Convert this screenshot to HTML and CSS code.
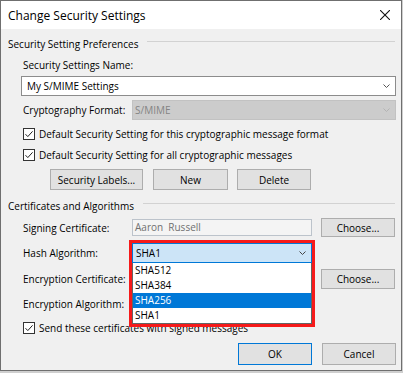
FILE: index.html
```html
<!DOCTYPE html>
<html lang="en">
<head>
  <meta charset="UTF-8" />
  <title>Change Security Settings</title>
  <link rel="stylesheet" href="styles.css">
</head>
<body>
  <div class="dialog">
    <div class="titlebar">
      <span class="title">Change Security Settings</span>
      <svg class="close" width="10" height="10" viewBox="0 0 10 10"><path d="M0 0L10 10M10 0L0 10" stroke="#111" stroke-width="1.1" fill="none"/></svg>
    </div>

    <div class="content">
      <div class="section">Security Setting Preferences</div>

      <div class="label-row">Security Settings Name:</div>
      <div class="combo name-combo">
        <span>My S/MIME Settings</span>
        <svg class="chev" width="7" height="4" viewBox="0 0 7 4"><path d="M0.5 0.5L3.5 3.5L6.5 0.5" stroke="#555" fill="none"/></svg>
      </div>

      <div class="field-row crypto-row">
        <span class="label">Cryptography Format:</span>
        <div class="combo disabled wide">
          <span>S/MIME</span>
          <svg class="chev" width="7" height="4" viewBox="0 0 7 4"><path d="M0.5 0.5L3.5 3.5L6.5 0.5" stroke="#b3b3b3" fill="none"/></svg>
        </div>
      </div>

      <div class="check-row check-first">
        <svg class="check" width="12" height="12" viewBox="0 0 12 12"><rect x="0.5" y="0.5" width="11" height="11" fill="#fff" stroke="#333"/><path d="M2.5 6.2L4.8 8.6L9.6 3.3" stroke="#222" fill="none"/></svg>
        <span>Default Security Setting for this cryptographic message format</span>
      </div>
      <div class="check-row check-second">
        <svg class="check" width="12" height="12" viewBox="0 0 12 12"><rect x="0.5" y="0.5" width="11" height="11" fill="#fff" stroke="#333"/><path d="M2.5 6.2L4.8 8.6L9.6 3.3" stroke="#222" fill="none"/></svg>
        <span>Default Security Setting for all cryptographic messages</span>
      </div>

      <div class="button-row">
        <button class="btn labels-btn">Security Labels...</button>
        <button class="btn new-btn">New</button>
        <button class="btn delete-btn">Delete</button>
      </div>

      <div class="section section-certs">Certificates and Algorithms</div>

      <div class="field-row signing-row">
        <span class="label">Signing Certificate:</span>
        <div class="textbox">Aaron&nbsp; Russell</div>
        <button class="btn choose-btn">Choose...</button>
      </div>

      <div class="field-row hash-row">
        <span class="label">Hash Algorithm:</span>
        <div class="hash-wrap">
          <div class="combo focused">
            <span>SHA1</span>
            <svg class="chev" width="7" height="4" viewBox="0 0 7 4"><path d="M0.5 0.5L3.5 3.5L6.5 0.5" stroke="#444" fill="none"/></svg>
          </div>
          <ul class="droplist">
            <li>SHA512</li>
            <li>SHA384</li>
            <li class="selected">SHA256</li>
            <li>SHA1</li>
          </ul>
          <div class="callout"></div>
        </div>
      </div>

      <!-- these two controls sit under the open list -->
      <div class="field-row row-spaced">
        <span class="label">Encryption Certificate:</span>
        <div class="textbox"></div>
        <button class="btn choose-btn">Choose...</button>
      </div>

      <div class="field-row row-tight">
        <span class="label">Encryption Algorithm:</span>
        <div class="combo"></div>
      </div>

      <div class="check-row check-last">
        <svg class="check" width="12" height="12" viewBox="0 0 12 12"><rect x="0.5" y="0.5" width="11" height="11" fill="#fff" stroke="#333"/><path d="M2.5 6.2L4.8 8.6L9.6 3.3" stroke="#222" fill="none"/></svg>
        <span>Send these certificates with signed messages</span>
      </div>

      <div class="footer">
        <button class="btn default-btn">OK</button>
        <button class="btn">Cancel</button>
      </div>
    </div>
  </div>
</body>
</html>
```

FILE: styles.css
```css
html, body {
  margin: 0;
  padding: 0;
  background: #cfcfcf;
}
.dialog {
  width: 402px;
  height: 371px;
  box-sizing: border-box;
  border: 1px solid #6f6f6f;
  background: #f0f0f0;
  font-family: "Open Sans", "Noto Sans", sans-serif;
  font-size: 10px;
  color: #000;
}
.titlebar {
  height: 28px;
  background: #fff;
  display: flex;
  align-items: center;
  justify-content: space-between;
  padding: 0 11px 0 7px;
}
.title {
  font-size: 12px;
}
.content {
  padding: 6px 5px 0 7px;
}
.section {
  display: flex;
  align-items: center;
  height: 18px;
}
.section::after {
  content: "";
  flex: 1;
  height: 1px;
  background: #d2d2d2;
  margin: 0 1px 6px 9px;
}
.section-certs {
  margin-top: 7px;
}
.label-row {
  margin-top: 3px;
  height: 18px;
  line-height: 18px;
  padding-left: 15px;
}
.combo {
  display: flex;
  align-items: center;
  justify-content: space-between;
  box-sizing: border-box;
  width: 180px;
  height: 20px;
  background: #fff;
  border: 1px solid #8c8c8c;
  padding: 0 5px 0 3px;
}
.combo .chev {
  flex: none;
}
.name-combo {
  width: auto;
  margin: 2px 0 0 13px;
  padding-left: 5px;
}
.combo.wide {
  width: auto;
  flex: 1;
}
.combo.disabled {
  background: #cccccc;
  border-color: #c2c2c2;
  color: #848484;
  padding-left: 2px;
}
.combo.focused {
  background: #cce4f7;
  border-color: #0078d7;
}
.field-row {
  display: flex;
  align-items: center;
  height: 20px;
  padding-left: 15px;
}
.field-row .label {
  width: 109px;
  flex: none;
}
.crypto-row {
  margin-top: 4px;
}
.check-row {
  display: flex;
  align-items: center;
  gap: 4px;
  height: 18px;
  padding-left: 15px;
}
.check {
  flex: none;
}
.check-first {
  margin-top: 5px;
}
.check-second {
  margin-top: 3px;
}
.check-last {
  margin-top: 5px;
}
.btn {
  box-sizing: border-box;
  height: 100%;
  padding: 0;
  background: #e1e1e1;
  border: 1px solid #adadad;
  font-family: inherit;
  font-size: 10px;
  color: #000;
}
.button-row {
  display: flex;
  gap: 10px;
  height: 21px;
  margin-top: 5px;
  padding-left: 42px;
}
.labels-btn {
  width: 93px;
}
.new-btn {
  width: 75px;
}
.delete-btn {
  width: 74px;
  margin-left: -1px;
}
.signing-row {
  margin-top: 3px;
  height: 19px;
}
.textbox {
  box-sizing: border-box;
  width: 180px;
  height: 17px;
  line-height: 15px;
  background: #f4f4f4;
  border: 1px solid #bcc3cb;
  color: #707070;
  padding-left: 2px;
}
.choose-btn {
  width: 74px;
  margin-left: 9px;
}
.hash-row {
  margin-top: 6px;
}
.hash-wrap {
  position: relative;
  z-index: 2;
  width: 180px;
  height: 100%;
}
.droplist {
  position: absolute;
  top: 100%;
  left: 0;
  right: 0;
  margin: 0;
  padding: 0;
  list-style: none;
  background: #fff;
  border: 1px solid #646464;
  border-top: none;
}
.droplist li {
  height: 15px;
  line-height: 15px;
  padding-left: 2px;
}
.droplist li.selected {
  background: #0078d7;
  color: #fff;
}
.callout {
  position: absolute;
  top: -3px;
  left: -3px;
  right: -3px;
  height: 87px;
  box-sizing: border-box;
  border: 3px solid #f61a1a;
}
.row-spaced {
  margin-top: 6px;
}
.row-tight {
  margin-top: 5px;
}
.footer {
  display: flex;
  justify-content: flex-end;
  gap: 10px;
  height: 22px;
  margin-top: 6px;
}
.footer .btn {
  width: 74px;
}
.default-btn {
  border-color: #0078d7;
}
```
